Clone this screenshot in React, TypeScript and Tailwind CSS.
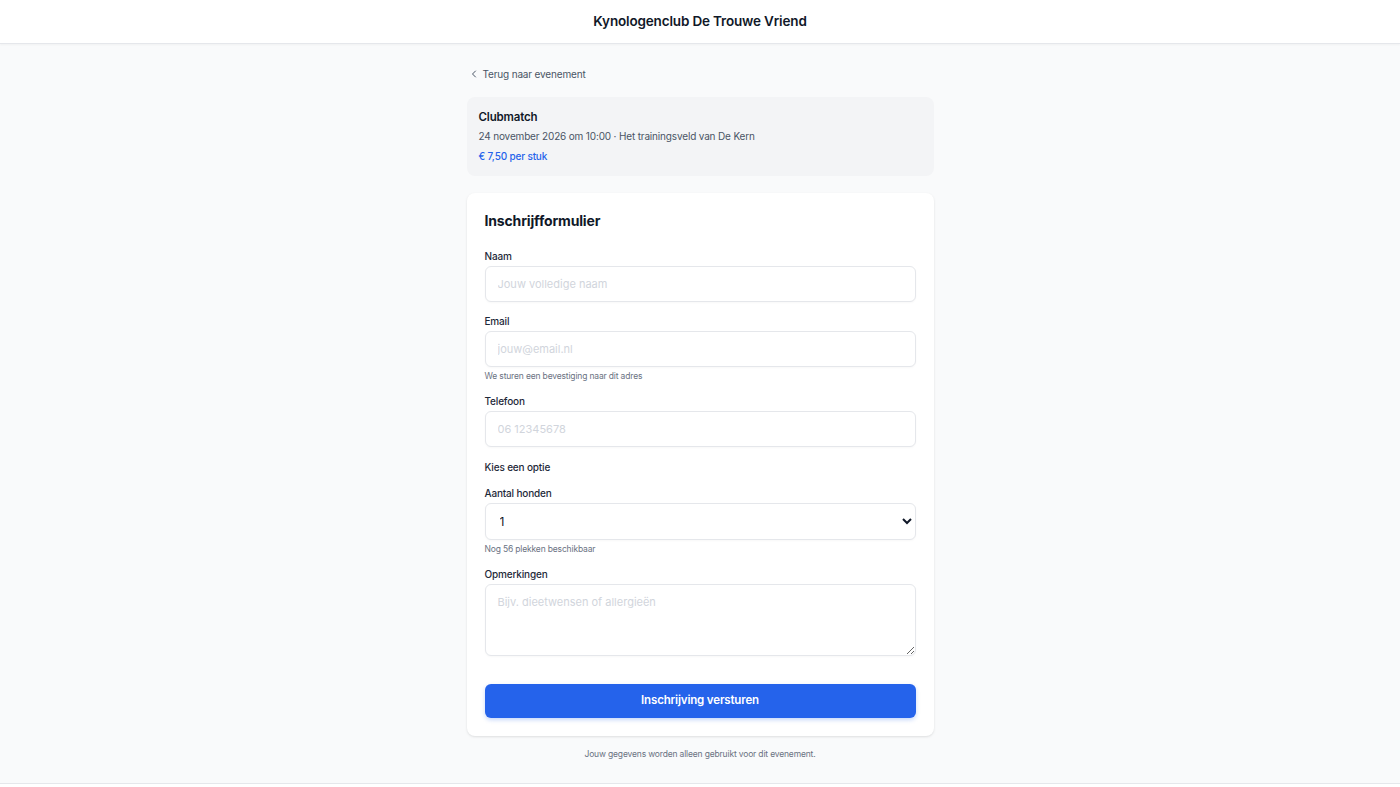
import React, { useState } from 'react';
import { ChevronLeft } from 'lucide-react';

const font = { fontFamily: 'Inter, "Noto Sans", sans-serif' };

const inputCls =
  'w-full h-9 px-3 bg-white border border-gray-200 rounded-md text-[11px] tracking-normal text-gray-900 placeholder:text-gray-300 shadow-[0_1px_2px_rgba(0,0,0,0.03)] outline-none focus:ring-2 focus:ring-blue-500';

const Field: React.FC<{ label: string; hint?: string; children: React.ReactNode }> = ({ label, hint, children }) => (
  <div>
    <label className="block text-[10px] leading-[14px] font-medium text-gray-800 mb-[3px]">{label}</label>
    {children}
    {hint && <p className="mt-[3px] text-[8.5px] leading-[12px] text-gray-500">{hint}</p>}
  </div>
);

const App: React.FC = () => {
  const [dogs, setDogs] = useState('1');

  return (
    <div className="min-h-screen bg-gray-50 flex flex-col tracking-[-0.01em]" style={font}>
      <header className="h-[44px] bg-white border-b border-gray-200 shadow-[0_1px_2px_rgba(0,0,0,0.04)] flex items-center justify-center">
        <h1 className="text-[13.5px] font-semibold text-gray-900">Kynologenclub De Trouwe Vriend</h1>
      </header>

      <main className="flex-1 flex justify-center">
        <div className="w-[467px] pt-[22px] pb-[23px]">
          <a href="#" className="flex items-center gap-[3px] text-[10px] leading-[16px] text-gray-600 pl-[1px]">
            <ChevronLeft className="w-[12px] h-[12px]" strokeWidth={2} />
            Terug naar evenement
          </a>

          <div className="mt-[15px] bg-gray-100 rounded-lg px-3 pt-[11px] pb-[11px]">
            <h2 className="text-[11.5px] leading-[18px] font-semibold text-gray-900">Clubmatch</h2>
            <p className="mt-[1px] text-[10px] leading-[18px] text-gray-600">
              24 november 2026 om 10:00 · Het trainingsveld van De Kern
            </p>
            <p className="mt-[2px] text-[10px] leading-[18px] font-medium text-[#2563eb]">€ 7,50 per stuk</p>
          </div>

          <form
            onSubmit={(e) => e.preventDefault()}
            className="mt-[17px] bg-white rounded-lg shadow-[0_1px_3px_rgba(0,0,0,0.08),0_1px_2px_rgba(0,0,0,0.04)] px-[18px] pt-[17px] pb-[18px]"
          >
            <h3 className="text-[14px] leading-[22px] font-bold text-gray-900 mb-[17px]">Inschrijfformulier</h3>

            <div className="space-y-3">
              <Field label="Naam">
                <input className={inputCls} placeholder="Jouw volledige naam" />
              </Field>
              <Field label="Email" hint="We sturen een bevestiging naar dit adres">
                <input className={inputCls} placeholder="jouw@email.nl" />
              </Field>
              <Field label="Telefoon">
                <input className={inputCls} placeholder="06 12345678" />
              </Field>
              <p className="pt-[1px] text-[10px] leading-[14px] font-medium text-gray-800">Kies een optie</p>
              <Field label="Aantal honden" hint="Nog 56 plekken beschikbaar">
                <select
                  value={dogs}
                  onChange={(e) => setDogs(e.target.value)}
                  className="w-full h-[37px] pl-[10px] pr-1 bg-white border border-gray-200 rounded-md text-[12px] text-gray-900 shadow-[0_1px_2px_rgba(0,0,0,0.03)] outline-none"
                >
                  {[1, 2, 3, 4, 5].map((n) => (
                    <option key={n} value={n}>{n}</option>
                  ))}
                </select>
              </Field>
              <Field label="Opmerkingen">
                <textarea
                  className="block w-full h-[72px] px-3 py-[9px] bg-white border border-gray-200 rounded-md text-[11px] tracking-normal text-gray-900 placeholder:text-gray-300 shadow-[0_1px_2px_rgba(0,0,0,0.03)] outline-none"
                  placeholder="Bijv. dieetwensen of allergieën"
                />
              </Field>
            </div>

            <button
              type="submit"
              className="mt-[28px] w-full h-[34px] bg-[#2563eb] hover:bg-blue-700 text-white text-[11.5px] font-semibold rounded-md shadow-[0_2px_4px_rgba(37,99,235,0.25)]"
            >
              Inschrijving versturen
            </button>
          </form>

          <p className="mt-[12px] text-center text-[8.5px] leading-[12px] text-gray-500">
            Jouw gegevens worden alleen gebruikt voor dit evenement.
          </p>
        </div>
      </main>

      <footer className="h-[4px] bg-white border-t border-gray-200" />
    </div>
  );
};

export default App;
